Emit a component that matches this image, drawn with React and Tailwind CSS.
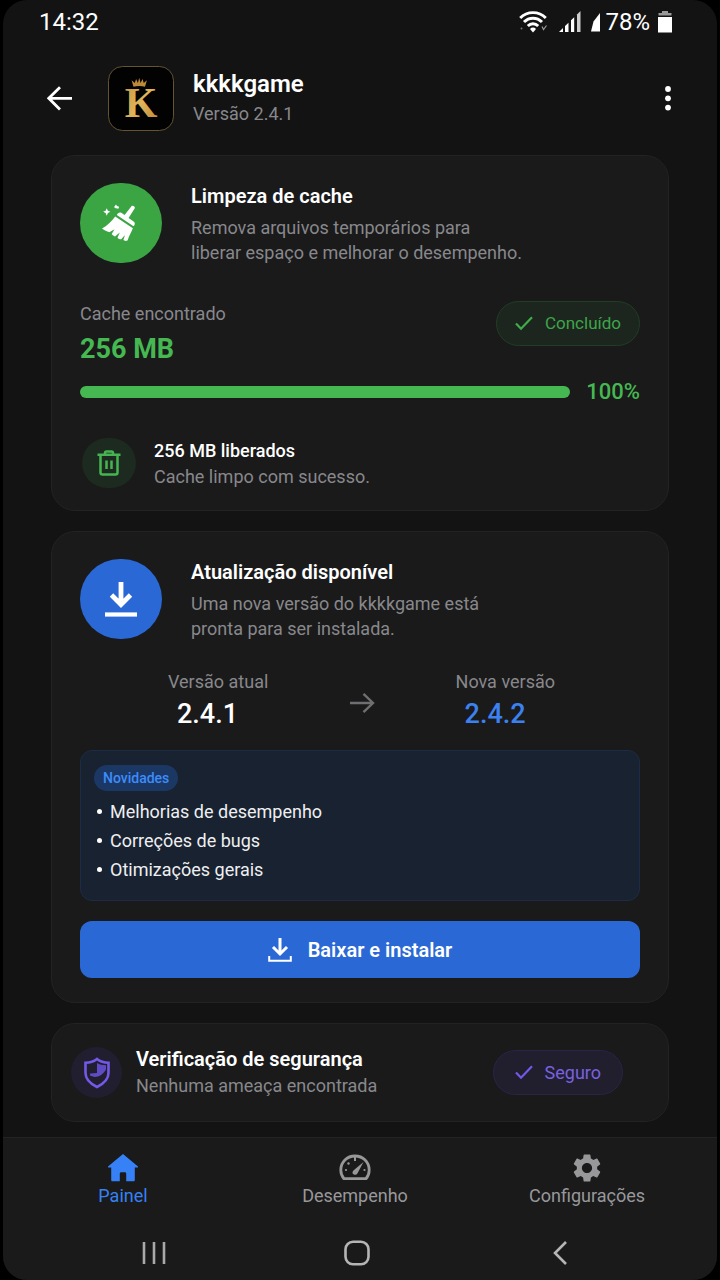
import React from "react";
import { MdSettings } from "react-icons/md";

const news = ["Melhorias de desempenho", "Correções de bugs", "Otimizações gerais"];

const WifiIcon = () => (
  <svg width="28" height="24" viewBox="0 0 28 24" fill="none" stroke="#fff" strokeWidth="2.9" aria-hidden="true">
    <path d="M1.2 8C8.200 0.800 19.800 0.800 26.800 8" />
    <path d="M5 12C10 6.900 18 6.900 23 12" />
    <path d="M8.800 16C11.800 12.900 16.200 12.900 19.200 16" />
    <path d="M14 22.500l-3-3.600c1.700-1.800 4.300-1.800 6 0z" fill="#fff" stroke="none" />
    <path d="M23 16.500l1.500 3 3-4" strokeWidth="1.200" stroke="#999" />
    <circle cx="2.500" cy="18.500" r="1" fill="#777" stroke="none" />
  </svg>
);

const SignalIcon = () => (
  <svg width="22" height="22" viewBox="0 0 22 22" fill="#fff" aria-hidden="true">
    <path d="M0 21l4-4v4zM6 15l3.500-3.300V21H6zM12 9.300l3.200-3V21H12z" />
    <path d="M18 3.500L21.500 0v21H18z" fill="#ccc" />
  </svg>
);

const BatteryIcon = () => (
  <svg width="14" height="22" viewBox="0 0 14 22" aria-hidden="true">
    <path d="M4 0h6v2h3.500v2.500H.5V2H4z" fill="#999" />
    <path d="M0 6h14v15.500H0z" fill="#fff" />
  </svg>
);

const LogoIcon = () => (
  <svg className="h-[65px] w-[66px] shrink-0" viewBox="0 0 66 65" role="img" aria-label="kkkkgame">
    <defs>
      <linearGradient id="gold" x1="0" y1="0" x2="1" y2="1">
        <stop offset="0" stopColor="#c7963f" />
        <stop offset="0.5" stopColor="#e0b45a" />
        <stop offset="1" stopColor="#b98430" />
      </linearGradient>
    </defs>
    <rect x="0.500" y="0.500" width="65" height="64" rx="14" fill="#020202" stroke="#665330" />
    <path
      d="M25.500 20.800L23.600 14.300l3.200 2.800 1.300-4 1.800 4 1.300-5.300 1.400 5.300 1.900-4 1.300 4 3.100-2.800-1.900 6.500c-3.800-1-7.600-1-11.500 0z"
      fill="#bd8a39"
    />
    <text x="33" y="51" textAnchor="middle" fontSize="42" fontWeight="700" fill="url(#gold)" className="font-['Liberation_Serif',serif]">
      K
    </text>
  </svg>
);

const BroomIcon = () => (
  <svg width="38" height="38" viewBox="0 0 40 40" fill="#fff" aria-hidden="true">
    <path d="M31 2.300c.9-1.300 4.400.6 3.500 2.300L28 14.800l5.600 4c1.600 1.200 1 3.500-.4 4.700L15.600 11.500c.8-1.900 2.900-3.300 4.700-2.200l3.500 2.400z" />
    <path d="M13.900 13.200l18.600 12.300c-1.300 3.500-4.300 8.200-5.400 12.700-1.700 1-3.500.7-4.600-.2l1.700-5.500-3.900 4.700c-1.600 0-3-.7-4-1.700l2.400-5.500-5 4.200c-1.700-.6-2.700-1.500-3.500-2.500l3-5.200-5.500 3.200C5 28.600 2.600 27.500 0 25.700c5.300-2.500 10.300-7.500 13.900-12.500z" />
    <path d="M5 4.500l1.200 2.700 2.600 1-2.600 1.200L5 12.300 3.800 9.400 1.200 8.200l2.600-1zM14.800.5l.9 1.700 2.300.8-.7 2-4-.7-.3-1.600z" />
  </svg>
);

const TrashIcon = () => (
  <svg width="24" height="26" viewBox="0 0 24 26" fill="none" stroke="#45b552" strokeWidth="2.500" aria-hidden="true">
    <path d="M0.500 4.800h23M8 4.500V3c0-.8.500-1.500 1.500-1.500h5c1 0 1.500.7 1.500 1.500v1.500M3.500 5v17.500c0 1 .7 2 2 2h13c1.300 0 2-1 2-2V5" />
    <path d="M9.500 10.500v8.500M14.500 10.500v8.500" />
  </svg>
);

const ShieldIcon = () => (
  <svg width="28" height="32" viewBox="0 0 28 32" aria-hidden="true">
    <path
      d="M14 2c3.500 2.800 7 3.700 11.500 3.800V16c0 6-4 10.300-11.500 14C6.500 26.300 2.500 22 2.500 16V5.800C7 5.700 10.500 4.800 14 2z"
      fill="none"
      stroke="#7459e8"
      strokeWidth="2.600"
    />
    <path d="M14 6c2.600 1.500 5.200 2.200 9 2.300v4.200C20.500 17 16.500 20 11.500 20L7 18.500v-2l7-.5z" fill="#5f4bc4" />
  </svg>
);

const CheckIcon = ({ color }) => (
  <svg width="18" height="15" viewBox="0 0 18 15" fill="none" stroke={color} strokeWidth="2.200" aria-hidden="true">
    <path d="M1 7.500l5 5.200L17 1.200" />
  </svg>
);

const HomeIcon = () => (
  <svg width="30" height="30" viewBox="0 0 30 30" fill="#3581f5" aria-hidden="true">
    <path d="M15 1L30 13.500c.3.500 0 1-.7 1h-2.500V27c0 .8-.5 1.300-1.300 1.300H18.200v-7.500c0-1-.5-1.500-1.500-1.500h-3.400c-1 0-1.500.5-1.500 1.500v7.500H4.500c-.8 0-1.300-.5-1.300-1.300V14.500H.7c-.7 0-1-.5-.7-1z" />
  </svg>
);

const GaugeIcon = () => (
  <svg width="32" height="30" viewBox="0 0 32 30" aria-hidden="true">
    <path
      d="M5 25.700C2.800 23.300 1.800 20.500 1.800 17 1.800 9 8 3 16 3s14.200 6 14.200 14c0 3.500-1 6.300-3.200 8.700z"
      fill="none"
      stroke="#98989a"
      strokeWidth="2.800"
      strokeLinejoin="round"
    />
    <path d="M24.500 9l-6 11.300c-1 1.800-3.300 2-4.500.8-1-1.300-.5-3 1-4.100z" fill="#98989a" />
    <path d="M15 3.500h2v4.500h-2z" fill="#98989a" />
    <g fill="#98989a">
      <circle cx="9.500" cy="10.500" r="1.200" />
      <circle cx="7" cy="17" r="1.100" />
      <circle cx="25.500" cy="17" r="1.100" />
    </g>
  </svg>
);

const StatusPill = ({ className, color, children }) => (
  <div className={`flex h-[45px] items-center gap-3 rounded-full border ${className}`}>
    <CheckIcon color={color} />
    <span>{children}</span>
  </div>
);

const NavItem = ({ icon, label, active }) => (
  <a
    href="#"
    aria-current={active ? "page" : undefined}
    className={`flex flex-col items-center text-lg leading-6 ${active ? "text-[#3581f5]" : "text-[#98989a]"}`}
  >
    <span className="flex h-8 items-center">{icon}</span>
    <span>{label}</span>
  </a>
);

const App = () => {
  return (
    <div className="min-h-screen bg-black px-[3px] font-[Roboto,sans-serif]">
      <div className="flex min-h-screen flex-col overflow-hidden rounded-3xl bg-[#131314] text-white">
        {/* Status bar */}
        <div className="flex h-11 items-center justify-between pr-[45px] pl-9 text-2xl">
          <span>14:32</span>
          <div className="flex items-center">
            <WifiIcon />
            <span className="ml-3">
              <SignalIcon />
            </span>
            <svg className="ml-2.5" width="10" height="20" viewBox="0 0 10 20" fill="#fff" aria-hidden="true">
              <path d="M0 19.500L2.500 9.500 9 1v18.500z" />
            </svg>
            <span className="ml-1">78%</span>
            <span className="ml-2">
              <BatteryIcon />
            </span>
          </div>
        </div>

        {/* Header */}
        <header className="flex items-center pt-[22px] pr-9 pl-11">
          <button type="button" aria-label="Voltar">
            <svg width="26" height="26" viewBox="0 0 26 26" fill="none" stroke="#fff" strokeWidth="2.800" aria-hidden="true">
              <path d="M13 1.200L1.800 12.300 13 23.400M1.800 12.300H25" />
            </svg>
          </button>
          <div className="ml-[35px]">
            <LogoIcon />
          </div>
          <div className="ml-[19px] flex-1">
            <h1 className="text-2xl leading-[29px] font-semibold">kkkkgame</h1>
            <p className="text-lg leading-[29px] text-[#88888b]">Versão 2.4.1</p>
          </div>
          <button type="button" aria-label="Mais opções">
            <svg width="26" height="26" viewBox="0 0 26 26" fill="#fff" aria-hidden="true">
              <circle cx="13" cy="3" r="2.900" />
              <circle cx="13" cy="12.300" r="2.900" />
              <circle cx="13" cy="21.600" r="2.900" />
            </svg>
          </button>
        </header>

        <main className="mt-6 flex flex-col gap-5 px-12">
          {/* Cache */}
          <section className="rounded-3xl border border-[#232324] bg-[#1a1a1b] px-7 pt-[27px] pb-5">
            <div className="flex gap-[29px]">
              <div className="flex h-20 w-[82px] shrink-0 items-center justify-center rounded-full bg-[#3ba544]">
                <BroomIcon />
              </div>
              <div>
                <h2 className="text-xl leading-[27px] font-semibold">Limpeza de cache</h2>
                <p className="mt-[5px] text-lg leading-[25px] text-[#88888b]">
                  Remova arquivos temporários para
                  <br />
                  liberar espaço e melhorar o desempenho.
                </p>
              </div>
            </div>

            <div className="mt-9 flex items-start justify-between">
              <div>
                <p className="text-lg leading-[25px] text-[#88888b]">Cache encontrado</p>
                <p className="mt-[5px] text-[27px] leading-9 font-bold text-[#45b851]">256 MB</p>
              </div>
              <StatusPill className="border-[#213d25] bg-[#1c261e] px-[18px] text-[17px] text-[#3fa54a]" color="#3fae4a">
                Concluído
              </StatusPill>
            </div>

            <div className="mt-[11px] flex items-center gap-4">
              <div
                role="progressbar"
                aria-label="Limpeza"
                aria-valuenow={100}
                className="h-3 flex-1 overflow-hidden rounded-full bg-[#2a2a2b]"
              >
                <div className="h-full bg-[#45b851]" style={{ width: "100%" }} />
              </div>
              <span className="text-[22px] leading-7 font-medium text-[#45b851]">100%</span>
            </div>

            <div className="mt-8 flex items-start gap-[18px] pl-0.5">
              <div className="flex h-[50px] w-[54px] items-center justify-center rounded-full bg-[#1d2a1f]">
                <TrashIcon />
              </div>
              <div className="text-lg leading-[26px]">
                <p className="font-medium">256 MB liberados</p>
                <p className="text-[#88888b]">Cache limpo com sucesso.</p>
              </div>
            </div>
          </section>

          {/* Update */}
          <section className="rounded-3xl border border-[#232324] bg-[#1a1a1b] px-7 pt-[27px] pb-6">
            <div className="flex gap-[29px]">
              <div className="flex h-20 w-[82px] shrink-0 items-center justify-center rounded-full bg-[#2a69d5]">
                <svg width="32" height="36" viewBox="0 0 32 36" fill="none" stroke="#fff" aria-hidden="true">
                  <path d="M16 1v22M6.500 14l9.500 9.500 9.500-9.500" strokeWidth="4.800" />
                  <path d="M0 33.500h32" strokeWidth="4.200" />
                </svg>
              </div>
              <div>
                <h2 className="text-xl leading-[27px] font-semibold">Atualização disponível</h2>
                <p className="mt-[5px] text-lg leading-[25px] text-[#88888b]">
                  Uma nova versão do kkkkgame está
                  <br />
                  pronta para ser instalada.
                </p>
              </div>
            </div>

            <div className="mt-7 flex items-center justify-between pr-[85px] pl-[88px]">
              <div>
                <p className="text-lg leading-[25px] text-[#88888b]">Versão atual</p>
                <p className="mt-1 pl-[9px] text-[27px] leading-8 font-medium">2.4.1</p>
              </div>
              <svg className="mt-1.5" width="26" height="22" viewBox="0 0 26 22" fill="none" stroke="#6f6f72" strokeWidth="2.400" aria-hidden="true">
                <path d="M1 11h23M14.500 1.800L24 11l-9.500 9.200" />
              </svg>
              <div>
                <p className="text-lg leading-[25px] text-[#88888b]">Nova versão</p>
                <p className="mt-1 pl-[9px] text-[27px] leading-8 font-medium text-[#3b82f0]">2.4.2</p>
              </div>
            </div>

            <div className="mt-5 rounded-xl border border-[#1c2c47] bg-[#182230] px-[13px] pt-3.5 pb-4">
              <span className="flex h-[26px] w-fit items-center rounded-full bg-[#1b3865] px-[9px] text-sm font-medium text-[#3d8cfb]">
                Novidades
              </span>
              <ul className="mt-1.5 text-lg leading-[29px] text-[#efeff0]">
                {news.map((item) => (
                  <li key={item} className="flex items-center gap-2 pl-[3px]">
                    <span className="h-[5px] w-[5px] rounded-full bg-white" />
                    {item}
                  </li>
                ))}
              </ul>
            </div>

            <button
              type="button"
              className="mt-5 flex h-[57px] w-full items-center justify-center gap-4 rounded-xl bg-[#2a69d5] text-xl font-semibold"
            >
              <svg width="24" height="26" viewBox="0 0 24 26" fill="none" stroke="#fff" aria-hidden="true">
                <path d="M12 1v15M5 10l7 7 7-7" strokeWidth="3" />
                <path d="M1.200 19v4.800h21.600V19" strokeWidth="2" />
              </svg>
              Baixar e instalar
            </button>
          </section>

          {/* Security */}
          <section className="flex items-center rounded-3xl border border-[#232324] bg-[#1a1a1b] py-[22px] pr-[45px] pl-[19px]">
            <div className="flex h-[51px] w-[51px] shrink-0 items-center justify-center rounded-full bg-[#211e30]">
              <ShieldIcon />
            </div>
            <div className="ml-3.5 flex-1">
              <h2 className="text-xl leading-[27px] font-semibold">Verificação de segurança</h2>
              <p className="text-lg leading-[26px] text-[#88888b]">Nenhuma ameaça encontrada</p>
            </div>
            <StatusPill className="border-[#2a2447] bg-[#211e2e] px-[21px] text-lg text-[#7862e0]" color="#7459e8">
              Seguro
            </StatusPill>
          </section>
        </main>

        <footer className="mt-auto border-t border-[#232324] bg-[#1a1a1b]">
          <nav className="grid grid-cols-3 pt-3.5 pr-3.5 pl-1">
            <NavItem icon={<HomeIcon />} label="Painel" active />
            <NavItem icon={<GaugeIcon />} label="Desempenho" />
            <NavItem icon={<MdSettings className="h-[34px] w-[34px]" />} label="Configurações" />
          </nav>

          {/* System buttons */}
          <div className="mt-[18px] grid h-[54px] grid-cols-3 place-items-center pr-14 pl-[50px]">
            <button type="button" aria-label="Recentes">
              <svg width="26" height="24" viewBox="0 0 26 24" stroke="#a9a9aa" strokeWidth="2.600" aria-hidden="true">
                <path d="M3 1v22M13 1v22M23 1v22" />
              </svg>
            </button>
            <button type="button" aria-label="Início">
              <svg width="26" height="26" viewBox="0 0 26 26" fill="none" stroke="#b5b5b6" strokeWidth="2.600" aria-hidden="true">
                <rect x="1.500" y="1.800" width="23" height="22.500" rx="7.500" />
              </svg>
            </button>
            <button type="button" aria-label="Voltar à tela anterior">
              <svg width="14" height="24" viewBox="0 0 14 24" fill="none" stroke="#b5b5b6" strokeWidth="2.600" aria-hidden="true">
                <path d="M13 1L2 12l11 11" />
              </svg>
            </button>
          </div>
        </footer>
      </div>
    </div>
  );
};

export default App;
